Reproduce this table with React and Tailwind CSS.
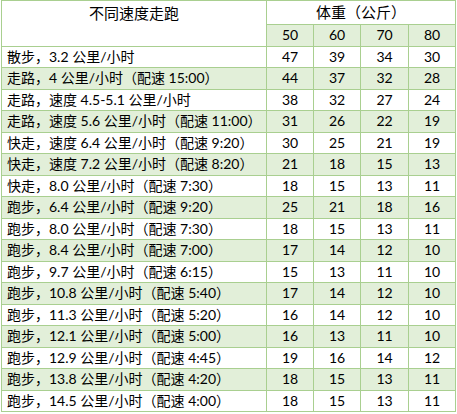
const rows = [
  ['散步，3.2 公里/小时', 47, 39, 34, 30],
  ['走路，4 公里/小时（配速 15:00）', 44, 37, 32, 28],
  ['走路，速度 4.5-5.1 公里/小时', 38, 32, 27, 24],
  ['走路，速度 5.6 公里/小时（配速 11:00）', 31, 26, 22, 19],
  ['快走，速度 6.4 公里/小时（配速 9:20）', 30, 25, 21, 19],
  ['快走，速度 7.2 公里/小时（配速 8:20）', 21, 18, 15, 13],
  ['快走，8.0 公里/小时（配速 7:30）', 18, 15, 13, 11],
  ['跑步，6.4 公里/小时（配速 9:20）', 25, 21, 18, 16],
  ['跑步，8.0 公里/小时（配速 7:30）', 18, 15, 13, 11],
  ['跑步，8.4 公里/小时（配速 7:00）', 17, 14, 12, 10],
  ['跑步，9.7 公里/小时（配速 6:15）', 15, 13, 11, 10],
  ['跑步，10.8 公里/小时（配速 5:40）', 17, 14, 12, 10],
  ['跑步，11.3 公里/小时（配速 5:20）', 16, 14, 12, 10],
  ['跑步，12.1 公里/小时（配速 5:00）', 16, 13, 11, 10],
  ['跑步，12.9 公里/小时（配速 4:45）', 19, 16, 14, 12],
  ['跑步，13.8 公里/小时（配速 4:20）', 18, 15, 13, 11],
  ['跑步，14.5 公里/小时（配速 4:00）', 18, 15, 13, 11],
]

const cell = 'border border-[#a9cf90] p-0'

export default function App() {
  return (
    <div
      className="w-[457px] h-[414px] bg-white pl-px text-[14px] leading-none text-black"
      style={{ fontFamily: 'Lato, "Noto Sans CJK SC", sans-serif' }}
    >
      <table className="border-collapse table-fixed w-[454px]">
        <colgroup>
          <col className="w-[265px]" />
          <col className="w-[47px]" />
          <col className="w-[47px]" />
          <col className="w-[48px]" />
          <col className="w-[47px]" />
        </colgroup>
        <thead>
          <tr className="h-[24px]">
            <th rowSpan={2} className={`${cell} font-normal align-top pt-[5px] text-center text-[15px]`}>
              不同速度走跑
            </th>
            <th colSpan={4} className={`${cell} font-normal text-center text-[15px]`}>
              体重（公斤）
            </th>
          </tr>
          <tr className="h-[21.5px] bg-[#e2efd9]">
            {[50, 60, 70, 80].map(n => (
              <th key={n} className={`${cell} font-normal text-center`}>{n}</th>
            ))}
          </tr>
        </thead>
        <tbody>
          {rows.map((r, i) => (
            <tr key={i} className={`h-[21.5px] ${i % 2 === 1 ? 'bg-[#e2efd9]' : 'bg-white'}`}>
              <td className={`${cell} pl-[5px] whitespace-nowrap`}>{r[0]}</td>
              {r.slice(1).map((v, j) => (
                <td key={j} className={`${cell} text-center`}>{v}</td>
              ))}
            </tr>
          ))}
        </tbody>
      </table>
    </div>
  )
}
